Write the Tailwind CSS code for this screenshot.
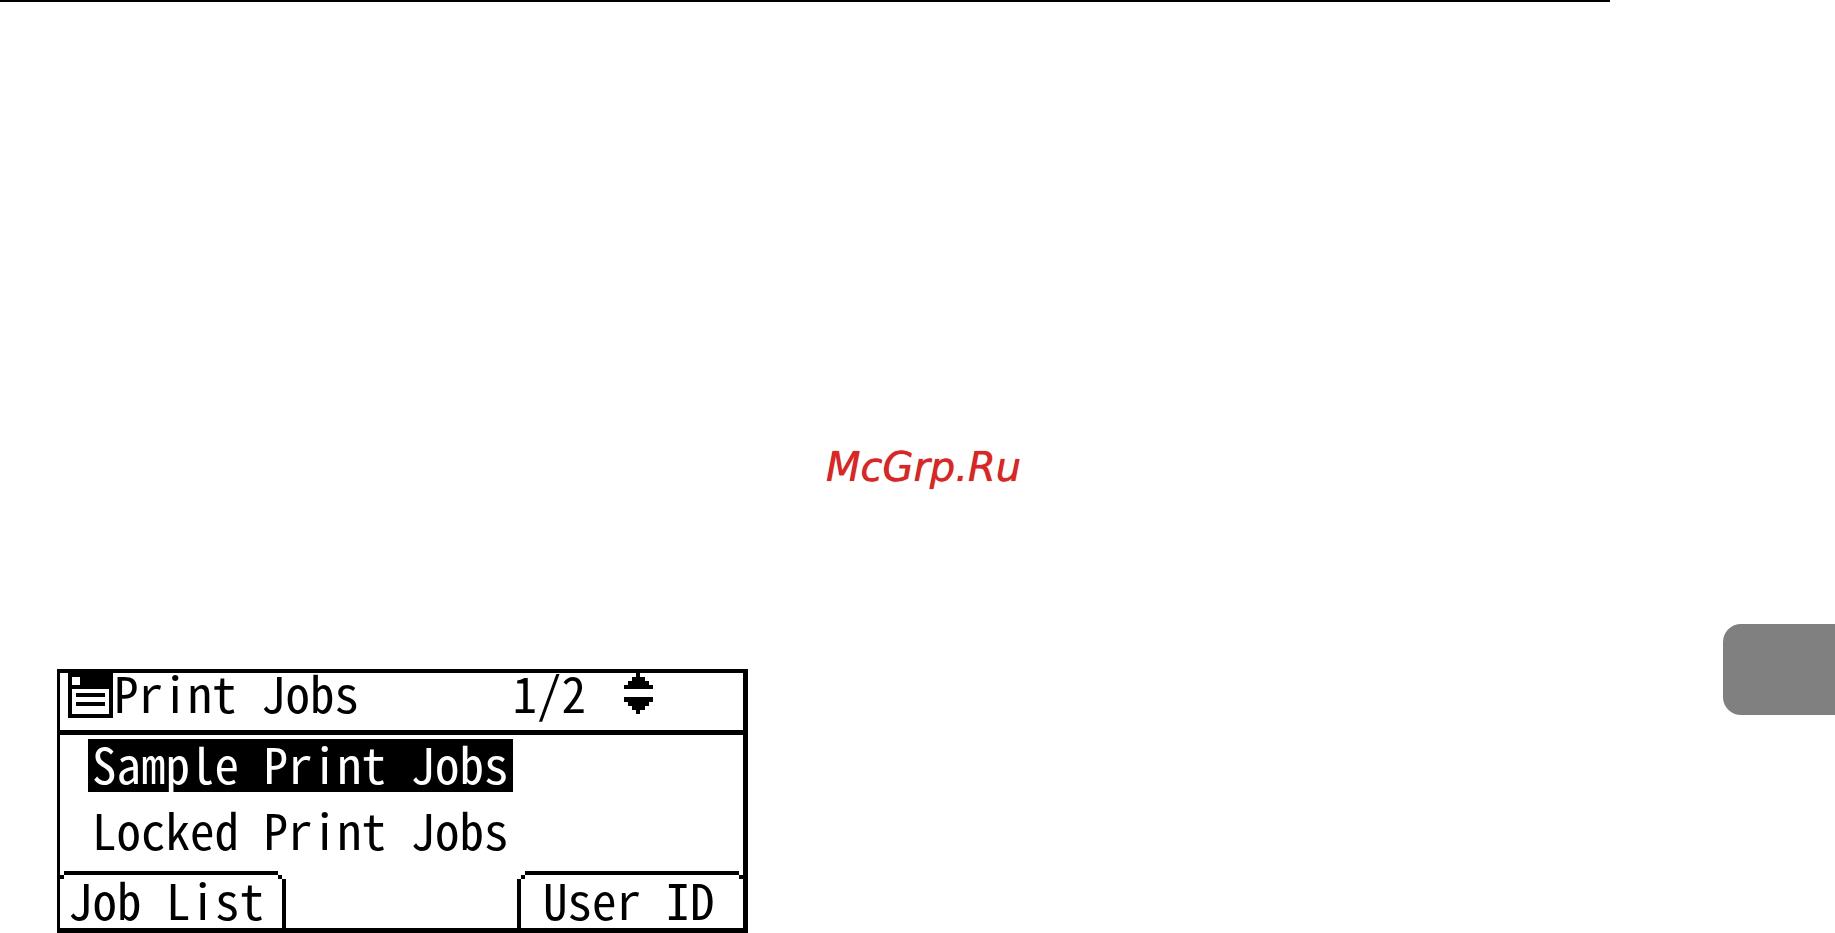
<!DOCTYPE html>
<html lang="en">
<head>
  <meta charset="UTF-8">
  <meta name="viewport" content="width=device-width, initial-scale=1.0">
  <title>Print Jobs</title>
  <script src="https://cdn.jsdelivr.net/npm/@tailwindcss/browser@4"></script>
</head>
<body class="bg-white text-black">
  <!-- Page rule -->
  <header class="mr-[225px] h-0.5 bg-black"></header>

  <p class="mt-[441px] pl-3 text-center font-['DejaVu_Sans',sans-serif] text-[40px] leading-[48px] italic text-[#dc2626] [text-shadow:0_0_1px_#7f1d1d]">McGrp.Ru</p>

  <main class="mt-[133px] flex items-start justify-between pl-[57px]">
    <!-- Printer display -->
    <section class="mt-[45px] w-full max-w-[691px] border-t-4 border-r-5 border-b-5 border-l-3 border-black font-['Noto_Sans_Mono_CJK_JP','Noto_Sans_CJK_JP',monospace] text-[49px] [font-feature-settings:'hwid']">
      <div class="flex items-start border-b-5 border-black pr-[90px] pb-3 pl-2 leading-[38px]">
        <svg class="size-[45px] shrink-0" viewBox="0 0 45 45" shape-rendering="crispEdges" aria-hidden="true">
          <path d="M0 0h45v45H0z" />
          <path fill="#fff" d="M4 4h8v8H4zM4 16h37v25H4z" />
          <path d="M8 20h29v4H8zM8 29h29v4H8z" />
        </svg>
        <h1 class="flex-1 pl-px whitespace-pre">Print Jobs</h1>
        <span class="mr-[38px]">1/2</span>
        <svg class="h-[41px] w-[29px] shrink-0" viewBox="0 0 29 41" shape-rendering="crispEdges" aria-hidden="true">
          <path d="M12 0h4v4h5v4h4v4h4v4H0v-4h4V8h4V4h4z" />
          <path d="M0 24h29v5h-4v4h-4v4h-5v4h-4v-4H8v-4H4v-4H0z" />
        </svg>
      </div>

      <ul class="flex flex-col items-start gap-[13px] pt-1 pb-[13px] pl-7 leading-[48px]">
        <li><button type="button" class="block bg-black px-1 pb-[5px] whitespace-pre text-white">Sample Print Jobs</button></li>
        <li><button type="button" class="block px-1 pb-[5px] whitespace-pre">Locked Print Jobs</button></li>
      </ul>

      <!-- Soft keys -->
      <div class="flex justify-between leading-[40px]">
        <button type="button" class="w-[226px] text-left">
          <span class="mr-1 flex h-2">
            <span class="size-1 self-end bg-black"></span>
            <span class="h-1 flex-1 bg-black"></span>
            <span class="size-1 self-end bg-black"></span>
          </span>
          <span class="block border-r-4 border-black pb-[9px] pl-2 whitespace-pre">Job List</span>
        </button>
        <button type="button" class="w-[226px] text-left">
          <span class="ml-1 flex h-2">
            <span class="size-1 self-end bg-black"></span>
            <span class="h-1 flex-1 bg-black"></span>
            <span class="size-1 self-end bg-black"></span>
          </span>
          <span class="block border-l-4 border-black pb-[9px] pl-[22px] whitespace-pre">User ID</span>
        </button>
      </div>
    </section>

    <!-- Chapter thumb tab -->
    <aside class="h-[91px] w-28 shrink-0 rounded-l-[18px] bg-[#808080]"></aside>
  </main>
</body>
</html>
